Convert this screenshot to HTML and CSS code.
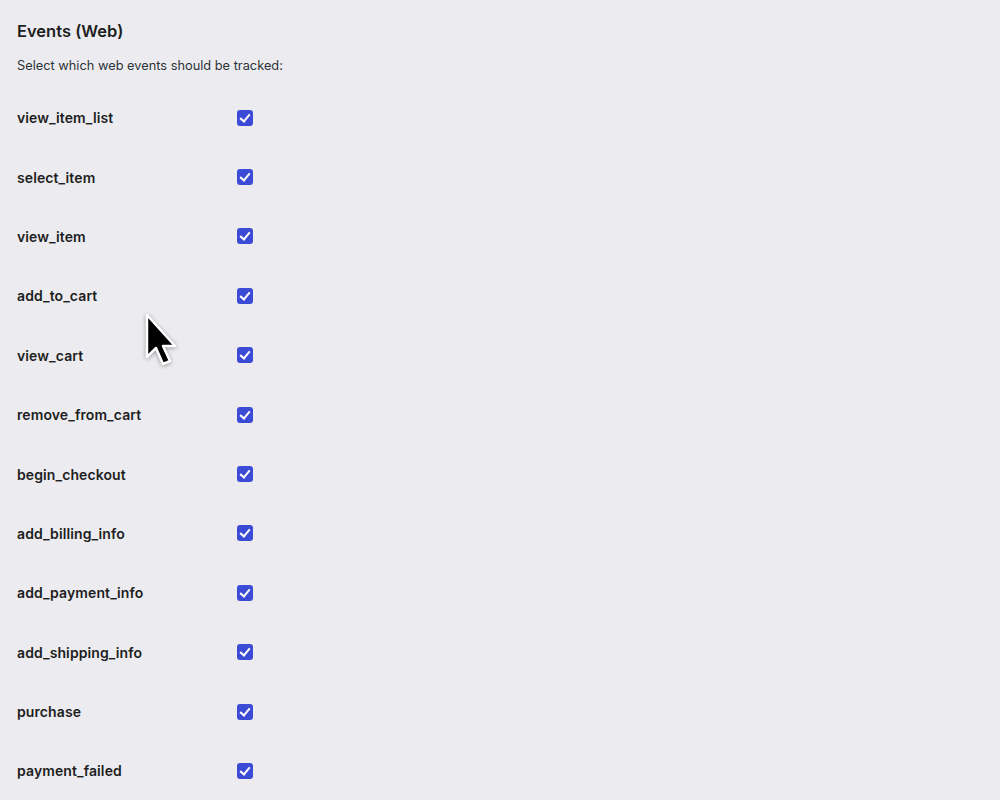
FILE: index.html
```html
<!DOCTYPE html>
<html lang="en">
<head>
    <meta charset="UTF-8">
    <title>Events (Web)</title>
    <link rel="stylesheet" href="styles.css">
</head>
<body>
    <div class="wrap">
        <h2 class="section-title">Events (Web)</h2>
        <p class="section-desc">Select which web events should be tracked:</p>
        <div class="event-list">
            <div class="event-row"><span class="event-name">view_item_list</span><span class="check"></span></div>
            <div class="event-row"><span class="event-name">select_item</span><span class="check"></span></div>
            <div class="event-row"><span class="event-name">view_item</span><span class="check"></span></div>
            <div class="event-row"><span class="event-name">add_to_cart</span><span class="check"></span></div>
            <div class="event-row"><span class="event-name">view_cart</span><span class="check"></span></div>
            <div class="event-row"><span class="event-name">remove_from_cart</span><span class="check"></span></div>
            <div class="event-row"><span class="event-name">begin_checkout</span><span class="check"></span></div>
            <div class="event-row"><span class="event-name">add_billing_info</span><span class="check"></span></div>
            <div class="event-row"><span class="event-name">add_payment_info</span><span class="check"></span></div>
            <div class="event-row"><span class="event-name">add_shipping_info</span><span class="check"></span></div>
            <div class="event-row"><span class="event-name">purchase</span><span class="check"></span></div>
            <div class="event-row"><span class="event-name">payment_failed</span><span class="check"></span></div>
        </div>
        <svg class="cursor" width="34" height="58" viewBox="0 0 34 58">
            <path d="M3 2 L3 44 L12 35 L19 51 L26 48 L19 33 L31 33 Z" fill="#000" stroke="#fff" stroke-width="2.5" stroke-linejoin="round"/>
        </svg>
    </div>
</body>
</html>
```

FILE: styles.css
```css
body, html {
    margin: 0;
    padding: 0;
    background: #ececf0;
}

body {
    font-family: Inter, "Noto Sans", sans-serif;
    color: #1e1e1e;
}

.wrap {
    position: relative;
    padding: 20px 17px;
}

.section-title {
    margin: 0;
    font-size: 16.5px;
    font-weight: 600;
    line-height: 22px;
}

.section-desc {
    margin: 15px 0 0;
    font-size: 12.8px;
    line-height: 18px;
    color: #2c3338;
}

.event-list {
    margin-top: 13px;
}

.event-row {
    display: flex;
    align-items: center;
    height: 59.4px;
}

.event-name {
    width: 220px;
    font-size: 14px;
    font-weight: 600;
    letter-spacing: 0.1px;
}

.check {
    position: relative;
    width: 16px;
    height: 16px;
    border-radius: 3px;
    background: #3c4bd6;
}

.check::after {
    content: "";
    position: absolute;
    left: 5px;
    top: 2px;
    width: 4px;
    height: 8px;
    border: solid #fff;
    border-width: 0 2px 2px 0;
    transform: rotate(40deg);
}

.cursor {
    position: absolute;
    left: 144px;
    top: 313px;
    filter: drop-shadow(0 1px 2px rgba(0, 0, 0, 0.35));
}
```
